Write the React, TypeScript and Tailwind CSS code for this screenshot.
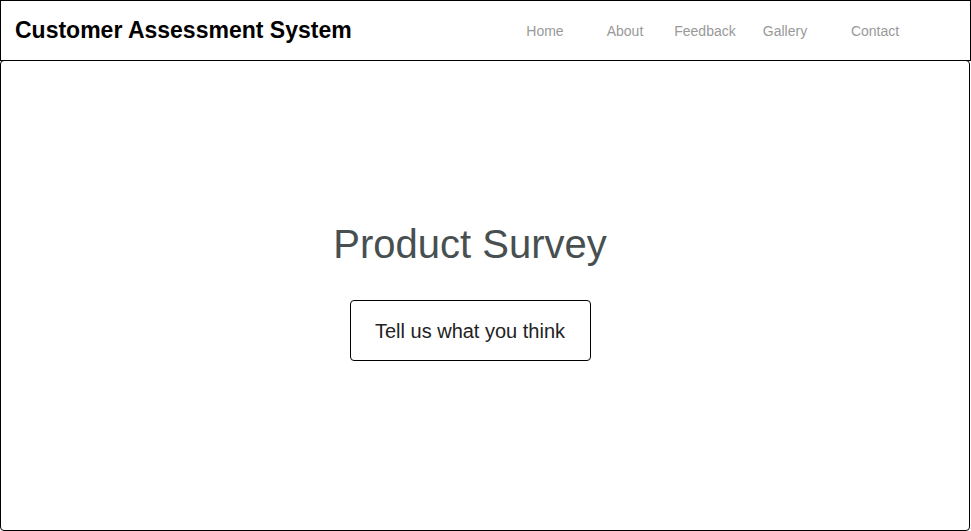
const navItems = ["Home", "About", "Feedback", "Gallery"];

export default function App() {
  return (
    <div className="min-h-[531px] w-[971px] bg-white font-['Liberation_Sans',Arial,sans-serif]">
      <header className="flex h-[61px] w-[971px] items-center justify-between border border-black pl-[14px] pr-[55px]">
        <h1 className="text-[23px] font-bold text-black">Customer Assessment System</h1>
        <nav className="mt-[2px] flex items-center text-[14px] text-[#999999]">
          {navItems.map((item) => (
            <a key={item} href="#" className="w-[80px] text-center">
              {item}
            </a>
          ))}
          <a href="#" className="ml-[10px] w-[80px] text-center">
            Contact
          </a>
        </nav>
      </header>

      <main className="-mt-px flex h-[471px] w-[970px] flex-col items-center rounded-[4px] border border-black pt-[163px] pr-[30px]">
        <h2 className="text-[40px] leading-[40px] text-[#484f50]">Product Survey</h2>
        <button className="mt-[36px] flex h-[61px] w-[241px] items-center justify-center rounded-[4px] border border-black text-[20px] text-[#222222]">
          Tell us what you think
        </button>
      </main>
    </div>
  );
}
